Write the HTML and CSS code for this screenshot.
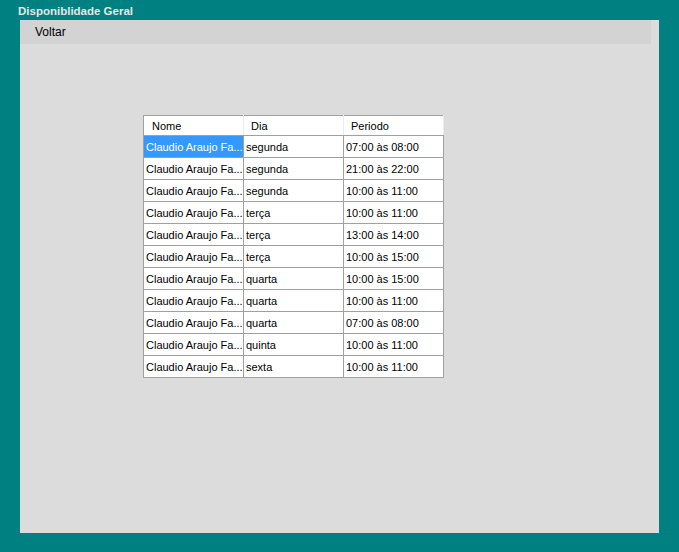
FILE: index.html
```html
<!DOCTYPE html>
<html>
<head>
<meta charset="utf-8">
<link rel="stylesheet" href="styles.css">
</head>
<body>
<div class="window">
  <div class="title">Disponiblidade Geral</div>
  <div class="panel">
    <div class="menubar"><span class="menu-item">Voltar</span></div>
    <div class="content">
      <table class="grid">
        <thead>
          <tr><th class="c1">Nome</th><th class="c2">Dia</th><th class="c3">Periodo</th></tr>
        </thead>
        <tbody>
          <tr><td class="sel">Claudio Araujo Fa...</td><td>segunda</td><td>07:00 às 08:00</td></tr>
          <tr><td>Claudio Araujo Fa...</td><td>segunda</td><td>21:00 às 22:00</td></tr>
          <tr><td>Claudio Araujo Fa...</td><td>segunda</td><td>10:00 às 11:00</td></tr>
          <tr><td>Claudio Araujo Fa...</td><td>terça</td><td>10:00 às 11:00</td></tr>
          <tr><td>Claudio Araujo Fa...</td><td>terça</td><td>13:00 às 14:00</td></tr>
          <tr><td>Claudio Araujo Fa...</td><td>terça</td><td>10:00 às 15:00</td></tr>
          <tr><td>Claudio Araujo Fa...</td><td>quarta</td><td>10:00 às 15:00</td></tr>
          <tr><td>Claudio Araujo Fa...</td><td>quarta</td><td>10:00 às 11:00</td></tr>
          <tr><td>Claudio Araujo Fa...</td><td>quarta</td><td>07:00 às 08:00</td></tr>
          <tr><td>Claudio Araujo Fa...</td><td>quinta</td><td>10:00 às 11:00</td></tr>
          <tr><td>Claudio Araujo Fa...</td><td>sexta</td><td>10:00 às 11:00</td></tr>
        </tbody>
      </table>
    </div>
  </div>
</div>
</body>
</html>
```
FILE: styles.css
```css
html, body {
  margin: 0;
  padding: 0;
  background: #008080;
}
.window {
  width: 679px;
  height: 552px;
  box-sizing: border-box;
  padding: 0 20px 19px 20px;
  display: flex;
  flex-direction: column;
}
.title {
  height: 20px;
  margin-left: -2px;
  font-family: "Liberation Sans", Arial, sans-serif;
  font-weight: bold;
  font-size: 11.5px;
  line-height: 23px;
  color: #e6e6e6;
  white-space: nowrap;
}
.panel {
  flex: 1;
  background: #dcdcdc;
  display: flex;
  flex-direction: column;
}
.menubar {
  height: 24px;
  margin-right: 8px;
  background: #d3d3d3;
  display: flex;
  align-items: center;
}
.menu-item {
  padding-left: 15px;
  font-family: "Liberation Sans", Arial, sans-serif;
  font-size: 12px;
  color: #000;
}
.content {
  padding: 71px 0 0 123px;
}
.grid {
  border-collapse: collapse;
  border: 1px solid #a0a0a0;
  background: #fff;
  font-family: "Liberation Sans", Arial, sans-serif;
  font-size: 11px;
  color: #000;
  table-layout: fixed;
}
.grid th {
  height: 20px;
  padding: 0 0 0 7px;
  text-align: left;
  font-weight: normal;
  background: #fff;
  border-right: 1px solid #e8eef6;
  border-bottom: 1px solid #a0a0a0;
  box-sizing: border-box;
}
.grid th.c1 { width: 100px; padding-left: 8px; }
.grid th.c2 { width: 100px; }
.grid th.c3 { width: 100px; }
.grid td {
  height: 21px;
  padding: 0 0 0 2px;
  border: 1px solid #a0a0a0;
  white-space: nowrap;
  overflow: hidden;
  vertical-align: middle;
}
.grid td.sel {
  background: #3399ff;
  color: #fff;
}
```
